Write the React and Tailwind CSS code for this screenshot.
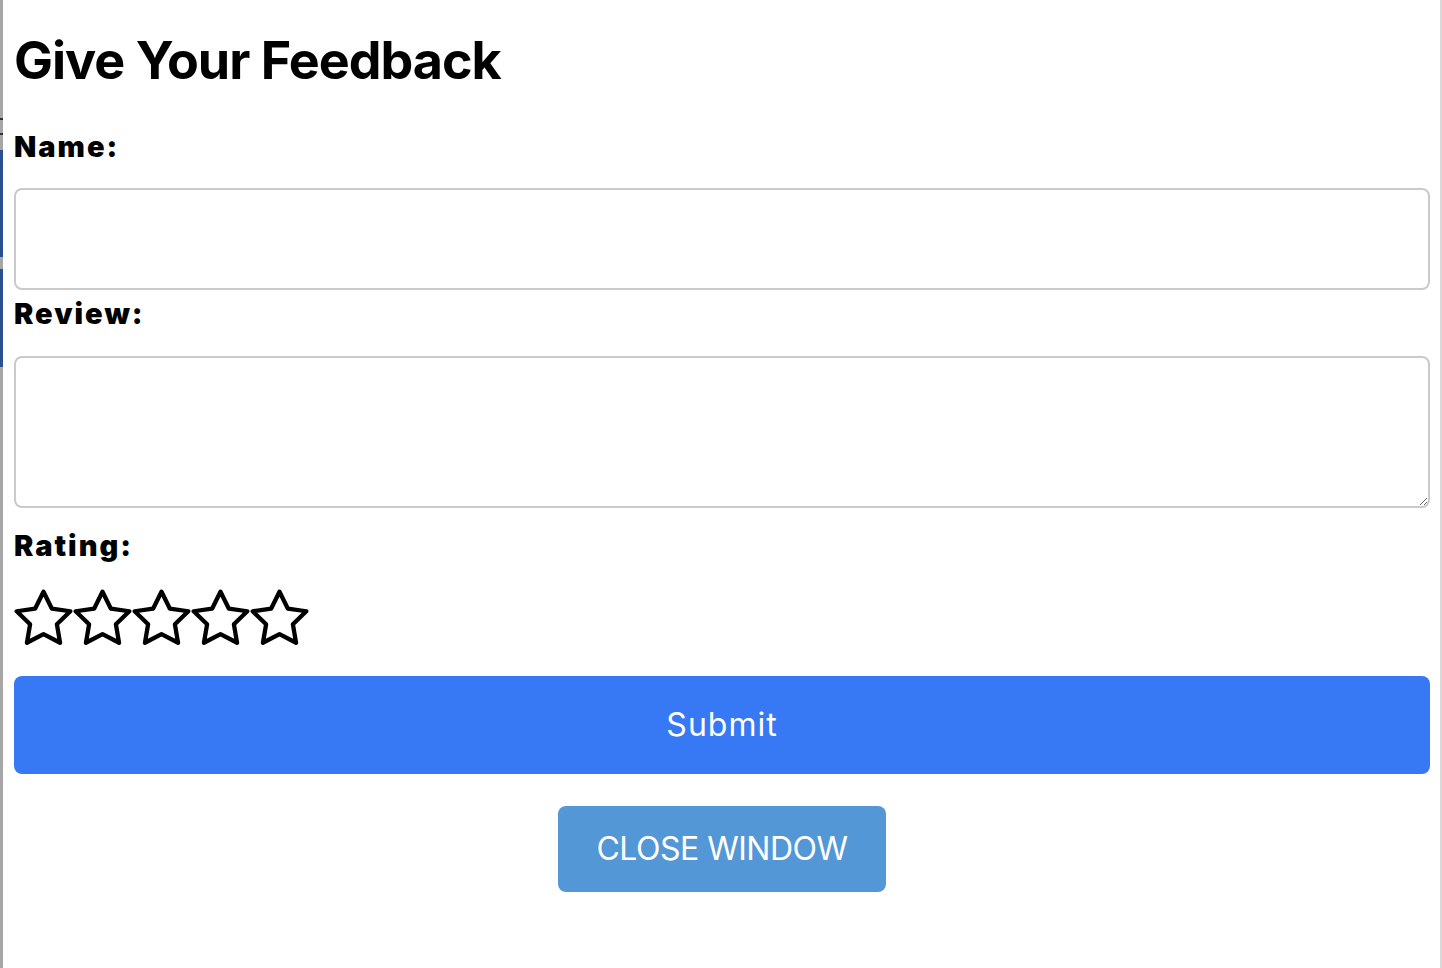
import { useState } from "react"

const Star = () => (
  <svg width="59" height="59" viewBox="1 0.6 22 22" className="block">
    <polygon
      points="12,2 15.09,8.26 22,9.27 17,14.14 18.18,21.02 12,17.77 5.82,21.02 7,14.14 2,9.27 8.91,8.26"
      fill="none"
      stroke="#000"
      strokeWidth="1.6"
      strokeLinejoin="round"
    />
  </svg>
)

export default function App() {
  const [name, setName] = useState("")
  const [review, setReview] = useState("")

  return (
    <div className="flex min-h-[968px] w-[1442px] bg-white font-['Inter',sans-serif] text-black">
      {/* left edge of page behind the modal */}
      <div className="flex w-[3px] flex-col bg-[#a6a6a6]">
        <div className="h-[118px]" />
        <div className="h-[2px] bg-[#333]" />
        <div className="h-[13px]" />
        <div className="h-[2px] bg-[#333]" />
        <div className="h-[15px]" />
        <div className="h-[107px] bg-[#2b4f8f]" />
        <div className="h-[12px]" />
        <div className="h-[98px] bg-[#2b4f8f]" />
      </div>

      <div className="flex-1 pl-[11px] pr-[10px]">
        <h1 className="mt-[31px] h-[60px] text-[52px] font-bold leading-[60px] tracking-[-1px]">
          Give Your Feedback
        </h1>

        <label className="mt-[40px] block h-[32px] text-[29px] font-black leading-[32px] tracking-[2px]">
          Name:
        </label>
        <input
          value={name}
          onChange={(e) => setName(e.target.value)}
          className="mt-[25px] block h-[102px] w-full rounded-lg border-2 border-[#cacaca] px-4 text-[28px] outline-none"
        />

        <label className="mt-[8px] block h-[32px] text-[29px] font-black leading-[32px] tracking-[2px]">
          Review:
        </label>
        <textarea
          value={review}
          onChange={(e) => setReview(e.target.value)}
          className="mt-[26px] block h-[152px] w-full rounded-lg border-2 border-[#cacaca] px-4 py-2 text-[28px] outline-none"
        />

        <label className="mt-[22px] block h-[32px] text-[29px] font-black leading-[32px] tracking-[2px]">
          Rating:
        </label>
        <div className="mt-[26px] flex h-[59px]">
          <Star />
          <Star />
          <Star />
          <Star />
          <Star />
        </div>

        <button className="mt-[29px] block h-[98px] w-full rounded-lg bg-[#3779f5] text-[32px] tracking-[1px] text-white">
          Submit
        </button>

        <div className="mt-[32px] flex justify-center">
          <button className="h-[86px] w-[328px] rounded-lg bg-[#5397d6] text-[32px] tracking-[-0.5px] text-white">
            CLOSE WINDOW
          </button>
        </div>
      </div>

      <div className="w-[2px] bg-[#d9d9d9]" />
    </div>
  )
}
